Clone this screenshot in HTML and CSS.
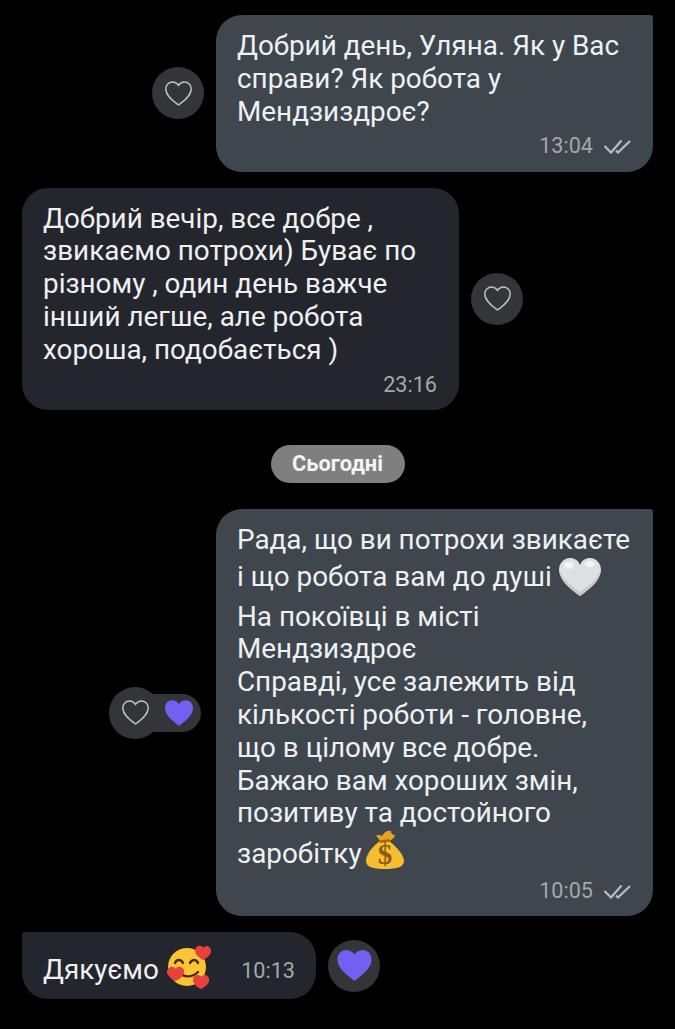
FILE: index.html
```html
<!DOCTYPE html>
<html lang="uk">
<head>
	<meta charset="UTF-8">
	<title>Чат</title>
	<link rel="stylesheet" href="styles.css">
</head>
<body>
	<svg class="defs" width="0" height="0">
		<defs>
			<path id="heart" d="M12 21.5C8 18.5 1.500 14 1.500 8.200 1.500 4.800 4 2.500 7 2.500c2 0 3.800 1 5 2.800 1.200-1.800 3-2.800 5-2.800 3 0 5.500 2.300 5.500 5.700 0 5.800-6.500 10.300-10.500 13.300z"/>
			<path id="ticks" d="M1.500 8l6.500 6.500L18.500 2.500M13 12.500l2 2L27 3"/>
		</defs>
	</svg>
	<div id="chat">
		<div class="row row-out">
			<div class="like">
				<svg class="heart-line" viewBox="0 0 24 24"><use href="#heart"/></svg>
			</div>
			<div class="bubble bubble-out">
				<p class="text">Добрий день, Уляна. Як у Вас<br>справи? Як робота у<br>Мендзиздроє?</p>
				<div class="meta">
					<span class="time">13:04</span>
					<svg class="ticks" viewBox="0 0 28 16"><use href="#ticks"/></svg>
				</div>
			</div>
		</div>

		<div class="row">
			<div class="bubble bubble-in">
				<p class="text">Добрий вечір, все добре ,<br>звикаємо потрохи) Буває по<br>різному , один день важче<br>інший легше, але робота<br>хороша, подобається )</p>
				<div class="meta">
					<span class="time">23:16</span>
				</div>
			</div>
			<div class="like">
				<svg class="heart-line" viewBox="0 0 24 24"><use href="#heart"/></svg>
			</div>
		</div>

		<div class="date"><span class="date-pill">Сьогодні</span></div>

		<div class="row row-out">
			<div class="likes">
				<div class="like like-top">
					<svg class="heart-line" viewBox="0 0 24 24"><use href="#heart"/></svg>
				</div>
				<div class="likes-count">
					<svg class="heart-full" viewBox="0 0 24 24"><use href="#heart"/></svg>
				</div>
			</div>
			<div class="bubble bubble-out">
				<p class="text">Рада, що ви потрохи звикаєте<br>і що робота вам до душі <svg class="emoji emoji-white" viewBox="0 0 44 40">
						<path fill="#dfe0e2" d="M22 39C14 33 2 25 1 13 1 6 6 1 12 1 16.500 1 20 3 22 8c2-5 5.500-7 10-7C38 1 43 6 43 13c-1 12-13 20-21 26z"/>
						<path fill="#c8c9cc" d="M22 39C14 33 2 25 1 13c3 9 12 15 21 22 9-7 18-13 21-22-1 12-13 20-21 26z"/>
						<ellipse cx="11" cy="8" rx="5" ry="3.500" fill="#f4f4f5"/>
						<ellipse cx="32" cy="7" rx="5" ry="3" fill="#f4f4f5"/>
					</svg><br>На покоївці в місті<br>Мендзиздроє<br>Справді, усе залежить від<br>кількості роботи - головне,<br>що в цілому все добре.<br>Бажаю вам хороших змін,<br>позитиву та достойного<br>заробітку<svg class="emoji emoji-bag" viewBox="0 0 40 40">
						<path fill="#e8a020" d="M16 12L11 5.500c3-1 4-.5 6 .5 2-4 6-6 9-5 0 3 2 4 4 4-1 4-5 6-9 7z"/>
						<path fill="#f7bd2e" d="M15 11c3 1 6 1 9 0 7 5 15 14 15 20 0 6-7 8-19 8S1 37 1 31c0-7 7-15 14-20z"/>
						<path fill="#a8660f" d="M14 10.500l10-1.500 1 2.500-10 1.500z"/>
						<text x="20" y="34" class="bag-sign">$</text>
					</svg></p>
				<div class="meta">
					<span class="time">10:05</span>
					<svg class="ticks" viewBox="0 0 28 16"><use href="#ticks"/></svg>
				</div>
			</div>
		</div>

		<div class="row">
			<div class="bubble bubble-in bubble-short">
				<span class="text text-short">Дякуємо</span>
				<svg class="emoji emoji-face" viewBox="0 0 46 46">
					<circle cx="21" cy="24" r="19" fill="#f9c534"/>
					<path fill="none" stroke="#4a2a12" stroke-width="2.400" stroke-linecap="round" d="M9 20c1.500-4 6-4 8 0M24 20c2-4 6.500-4 8 0M12 28c5 7 14 7 20 1"/>
					<path fill="#ea3f3f" d="M37 17c-3-2-8-5-8-9.500 0-3 3-5.500 6-4.500 1 .3 2 1 2.500 2 1-1.500 3-2.500 5-1.500 3 1.500 3 5 1.500 8-1.500 2-4 4-7 5.500zM9 38c-3-2-8-5-8-9 0-3 3-6 6-5 1 .2 2 1 2.500 2 1-1.500 3-2.500 5-2 3 1 4.500 4 3 7-1 3-5 6-8.500 7zM35 46c-3-1-8-5-8-9 0-3 2-5 5-5 1.500 0 2.500 1 3 2 1-1.500 2.500-2 4-2 3 0 5 3 4 6.500-1 3-4.500 6-8 7.500z"/>
				</svg>
				<span class="time time-short">10:13</span>
			</div>
			<div class="like">
				<svg class="heart-full heart-big" viewBox="0 0 24 24"><use href="#heart"/></svg>
			</div>
		</div>
	</div>
</body>
</html>
```

FILE: styles.css
```css
*{
	margin: 0;
	padding: 0;
	box-sizing: border-box;
}
html, body{
	height: 100%;
}
body{
	background: #000;
	font-family: Roboto, "Liberation Sans", sans-serif;
	color: #eff0f1;
	overflow: hidden;
}
.defs{
	position: absolute;
}
#chat{
	display: flex;
	flex-direction: column;
	gap: 16px;
	padding: 15px 22px 0;
}
.row{
	display: flex;
	align-items: center;
	gap: 12px;
}
.row-out{
	justify-content: flex-end;
}
.bubble{
	width: 437px;
	padding: 15px 22px 10px 21px;
	border-radius: 26px;
}
.bubble-out{
	background: #3f464e;
	border-top-right-radius: 3px;
}
.bubble-in{
	background: #23262c;
}
.bubble-short{
	width: 294px;
	height: 67px;
	padding: 0 21px 0 21px;
	display: flex;
	align-items: center;
	border-top-left-radius: 3px;
}
.text{
	font-size: 27.85px;
	line-height: 32.8px;
	white-space: nowrap;
}
.text-short{
	margin-top: 10px;
}
.meta{
	display: flex;
	justify-content: flex-end;
	align-items: center;
	gap: 10px;
	height: 33.2px;
	padding-top: 2px;
}
.time{
	font-size: 21.6px;
	color: #a3a8ad;
}
.time-short{
	margin-left: auto;
	margin-top: 10px;
}
.ticks{
	width: 28px;
	height: 16px;
	fill: none;
	stroke: #b9bdc1;
	stroke-width: 2.200;
}
.like{
	width: 52px;
	height: 52px;
	flex-shrink: 0;
	border-radius: 50%;
	background: #343538;
	display: flex;
	align-items: center;
	justify-content: center;
}
.like-top{
	position: relative;
	z-index: 1;
}
.heart-line{
	width: 29px;
	height: 29px;
	fill: none;
	stroke: #bfc0c2;
	stroke-width: 1.200;
}
.heart-full{
	width: 32px;
	height: 32px;
	fill: #7360f2;
}
.heart-big{
	width: 39px;
	height: 39px;
}
.likes{
	display: flex;
	align-items: center;
	margin-right: 3px;
}
.likes-count{
	width: 58px;
	height: 38px;
	margin-left: -18px;
	padding-right: 6px;
	border-radius: 0 19px 19px 0;
	background: #343538;
	display: flex;
	align-items: center;
	justify-content: flex-end;
}
.date{
	display: flex;
	justify-content: center;
	margin: 19px 0 10px;
}
.date-pill{
	width: 134px;
	height: 38px;
	border-radius: 19px;
	background: #7f7f80;
	color: #f4f4f4;
	font-size: 21.8px;
	font-weight: 700;
	line-height: 38px;
	text-align: center;
}
.emoji{
	display: inline-block;
}
.emoji-white{
	width: 44px;
	height: 40px;
	margin-left: -1px;
	margin-bottom: 4px;
	vertical-align: -15px;
}
.emoji-bag{
	width: 40px;
	height: 40px;
	margin-bottom: 3px;
	vertical-align: -10px;
	margin-left: 3px;
}
.emoji-face{
	width: 46px;
	height: 46px;
	margin-left: 7px;
	flex-shrink: 0;
}
.bag-sign{
	font-family: "Liberation Serif", serif;
	font-size: 29px;
	font-weight: 700;
	fill: #8a5a12;
	text-anchor: middle;
}
```
